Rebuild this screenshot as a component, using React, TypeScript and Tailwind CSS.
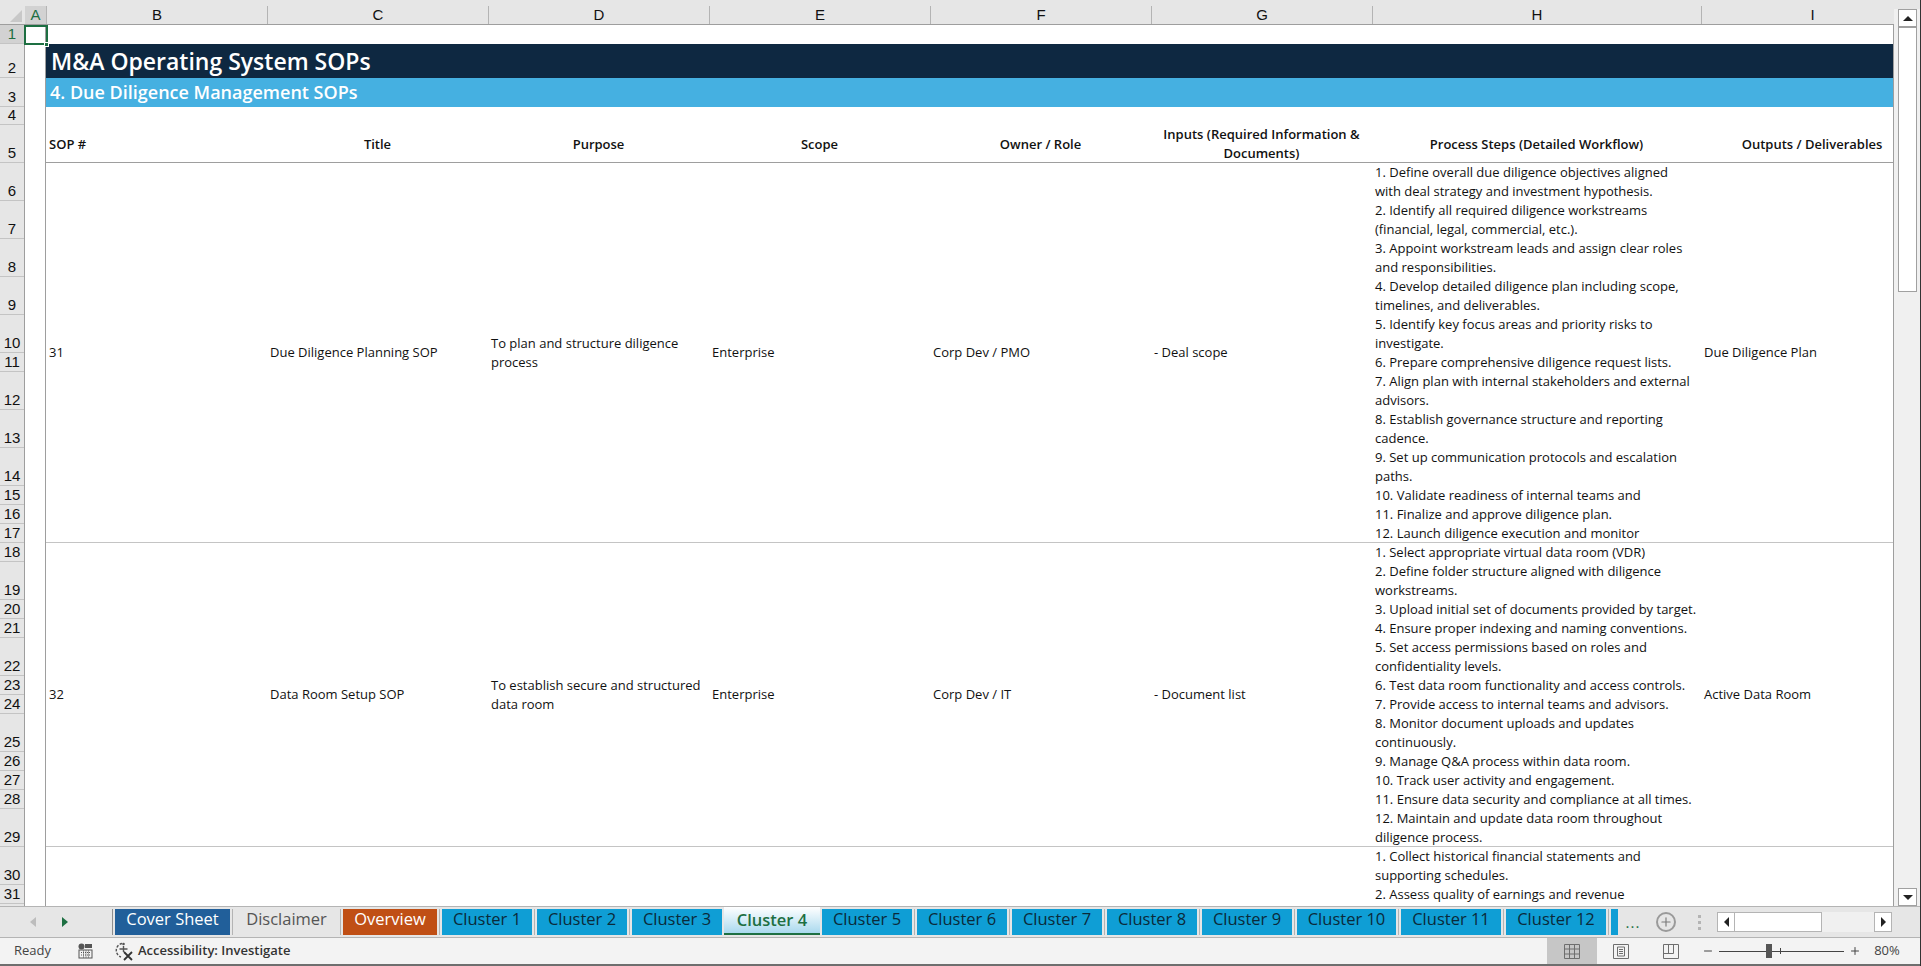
import React from "react";
import { Plus, Minus } from "lucide-react";

const sansStack = '"Open Sans", "Noto Sans", sans-serif';
const narrowStack = '"Liberation Sans Narrow", "Liberation Sans", sans-serif';

const colLetters = [
    { label: "A", w: "w-[22px]" },
    { label: "B", w: "w-[221px]" },
    { label: "C", w: "w-[221px]" },
    { label: "D", w: "w-[221px]" },
    { label: "E", w: "w-[221px]" },
    { label: "F", w: "w-[221px]" },
    { label: "G", w: "w-[221px]" },
    { label: "H", w: "w-[329px]" },
    { label: "I", w: "w-[222px]" },
];

const rowHeights: [number, string][] = [
    [1, "h-[19px]"], [2, "h-[34px]"], [3, "h-[29px]"], [4, "h-[18px]"], [5, "h-[38px]"],
    [6, "h-[38px]"], [7, "h-[38px]"], [8, "h-[38px]"], [9, "h-[38px]"], [10, "h-[38px]"],
    [11, "h-[19px]"], [12, "h-[38px]"], [13, "h-[38px]"], [14, "h-[38px]"], [15, "h-[19px]"],
    [16, "h-[19px]"], [17, "h-[19px]"], [18, "h-[19px]"], [19, "h-[38px]"], [20, "h-[19px]"],
    [21, "h-[19px]"], [22, "h-[38px]"], [23, "h-[19px]"], [24, "h-[19px]"], [25, "h-[38px]"],
    [26, "h-[19px]"], [27, "h-[19px]"], [28, "h-[19px]"], [29, "h-[38px]"], [30, "h-[38px]"],
    [31, "h-[19px]"],
];

const sops = [
    {
        id: "31",
        title: "Due Diligence Planning SOP",
        purpose: "To plan and structure diligence process",
        scope: "Enterprise",
        owner: "Corp Dev / PMO",
        inputs: "- Deal scope",
        outputs: "Due Diligence Plan",
        height: "h-[380px]",
        steps: [
            "1. Define overall due diligence objectives aligned\nwith deal strategy and investment hypothesis.",
            "2. Identify all required diligence workstreams\n(financial, legal, commercial, etc.).",
            "3. Appoint workstream leads and assign clear roles\nand responsibilities.",
            "4. Develop detailed diligence plan including scope,\ntimelines, and deliverables.",
            "5. Identify key focus areas and priority risks to\ninvestigate.",
            "6. Prepare comprehensive diligence request lists.",
            "7. Align plan with internal stakeholders and external\nadvisors.",
            "8. Establish governance structure and reporting\ncadence.",
            "9. Set up communication protocols and escalation\npaths.",
            "10. Validate readiness of internal teams and",
            "11. Finalize and approve diligence plan.",
            "12. Launch diligence execution and monitor",
        ],
    },
    {
        id: "32",
        title: "Data Room Setup SOP",
        purpose: "To establish secure and structured data room",
        scope: "Enterprise",
        owner: "Corp Dev / IT",
        inputs: "- Document list",
        outputs: "Active Data Room",
        height: "h-[304px]",
        steps: [
            "1. Select appropriate virtual data room (VDR)",
            "2. Define folder structure aligned with diligence\nworkstreams.",
            "3. Upload initial set of documents provided by target.",
            "4. Ensure proper indexing and naming conventions.",
            "5. Set access permissions based on roles and\nconfidentiality levels.",
            "6. Test data room functionality and access controls.",
            "7. Provide access to internal teams and advisors.",
            "8. Monitor document uploads and updates\ncontinuously.",
            "9. Manage Q&A process within data room.",
            "10. Track user activity and engagement.",
            "11. Ensure data security and compliance at all times.",
            "12. Maintain and update data room throughout\ndiligence process.",
        ],
    },
];

const tabs = [
    { name: "Cover Sheet", w: "w-[115px]", cls: "bg-[#215f9a] text-white" },
    { name: "Disclaimer", w: "w-[103px]", cls: "text-[#555555]" },
    { name: "Overview", w: "w-[94px]", cls: "bg-[#c04f15] text-white" },
    { name: "Cluster 1", w: "w-[90px]", cls: "bg-[#0f9ed5] text-[#0b2a3a]" },
    { name: "Cluster 2", w: "w-[90px]", cls: "bg-[#0f9ed5] text-[#0b2a3a]" },
    { name: "Cluster 3", w: "w-[90px]", cls: "bg-[#0f9ed5] text-[#0b2a3a]" },
];

const tabsAfter = [
    { name: "Cluster 5", w: "w-[90px]" },
    { name: "Cluster 6", w: "w-[90px]" },
    { name: "Cluster 7", w: "w-[90px]" },
    { name: "Cluster 8", w: "w-[90px]" },
    { name: "Cluster 9", w: "w-[90px]" },
    { name: "Cluster 10", w: "w-[99px]" },
    { name: "Cluster 11", w: "w-[100px]" },
    { name: "Cluster 12", w: "w-[100px]" },
];

const Cell = ({ w, children, cls = "" }: { w: string; children?: React.ReactNode; cls?: string }) => (
    <div className={`${w} shrink-0 px-[3px] flex items-center leading-[19px] ${cls}`}>
        <div className="w-full">{children}</div>
    </div>
);

const SopRow = ({ sop }: { sop: (typeof sops)[number] }) => (
    <div className={`flex shrink-0 ${sop.height} border-b border-[#c4c4c4] text-[13px] text-[#111111]`}>
        <Cell w="w-[221px]">{sop.id}</Cell>
        <Cell w="w-[221px]">{sop.title}</Cell>
        <Cell w="w-[221px]">{sop.purpose}</Cell>
        <Cell w="w-[221px]">{sop.scope}</Cell>
        <Cell w="w-[221px]">{sop.owner}</Cell>
        <Cell w="w-[221px]">{sop.inputs}</Cell>
        <Cell w="w-[329px]" cls="items-start whitespace-pre-line">
            {sop.steps.map((s) => (
                <div key={s}>{s}</div>
            ))}
        </Cell>
        <Cell w="w-[222px]">{sop.outputs}</Cell>
    </div>
);

const SheetTab = ({ name, w, cls }: { name: string; w: string; cls: string }) => (
    <>
        <div className={`${w} shrink-0 h-[26px] flex items-center justify-center pb-[5px] text-[16.5px] ${cls}`}>{name}</div>
        <div className="w-[5px] shrink-0 flex justify-center">
            <div className="w-px h-[26px] bg-[#b4b4b4]" />
        </div>
    </>
);

export default function App() {
    return (
        <div
            className="w-[1921px] h-[966px] overflow-hidden flex flex-col bg-white border-r border-[#333333]"
            style={{ fontFamily: sansStack }}
        >
            <div className="flex h-[906px] shrink-0">
                <div className="w-[1894px] shrink-0 flex flex-col overflow-hidden">
                    {/* column letters */}
                    <div
                        className="flex h-[25px] shrink-0 pt-[6px] bg-[#e6e6e6] border-b border-[#9e9e9e] overflow-hidden"
                        style={{ fontFamily: narrowStack }}
                    >
                        <div className="w-[25px] shrink-0 flex justify-end items-end pr-[3px] pb-[2px]">
                            <div className="w-0 h-0 border-l-[12px] border-b-[12px] border-l-transparent border-b-[#c8c8c8]" />
                        </div>
                        {colLetters.map((c) => (
                            <div
                                key={c.label}
                                className={`${c.w} shrink-0 flex items-center justify-center text-[15px] border-r border-[#b4b4b4] ${c.label === "A" ? "bg-[#d2d2d2] text-[#1d6f42]" : "text-[#111111]"}`}
                            >
                                {c.label}
                            </div>
                        ))}
                    </div>

                    <div className="flex h-[881px] shrink-0 overflow-hidden">
                        {/* row numbers */}
                        <div
                            className="w-[25px] shrink-0 bg-[#e6e6e6] border-r border-[#9e9e9e] flex flex-col"
                            style={{ fontFamily: narrowStack }}
                        >
                            {rowHeights.map(([n, h]) => (
                                <div
                                    key={n}
                                    className={`${h} shrink-0 flex items-end justify-center text-[15px] leading-[18px] border-b border-[#c4c4c4] ${n === 1 ? "bg-[#d2d2d2] text-[#1d6f42]" : "text-[#111111]"}`}
                                >
                                    {n}
                                </div>
                            ))}
                        </div>

                        {/* column A */}
                        <div className="w-[21px] shrink-0 border-r border-[#9e9e9e] relative">
                            <div className="absolute left-[-1px] top-0 w-[24px] h-[20px] border-2 border-[#1d6f42]" />
                            <div className="absolute left-[19px] top-[17px] w-[5px] h-[5px] bg-[#1d6f42] border border-white z-10" />
                        </div>

                        {/* sheet */}
                        <div className="flex-1 min-w-0 flex flex-col overflow-hidden border-r border-[#9e9e9e]">
                            <div className="h-[19px] shrink-0" />
                            <div className="h-[34px] shrink-0 bg-[#0e2841] text-white flex items-center pl-[5px] text-[23px] font-semibold">
                                M&amp;A Operating System SOPs
                            </div>
                            <div className="h-[29px] shrink-0 bg-[#45b0e1] text-white flex items-center pl-[4px] text-[18px] font-semibold">
                                4. Due Diligence Management SOPs
                            </div>
                            <div className="h-[18px] shrink-0" />
                            <div className="flex h-[38px] shrink-0 pt-px border-b border-[#9e9e9e] text-[13px] font-semibold text-[#111111]">
                                <Cell w="w-[221px]">SOP #</Cell>
                                <Cell w="w-[221px]" cls="text-center">Title</Cell>
                                <Cell w="w-[221px]" cls="text-center">Purpose</Cell>
                                <Cell w="w-[221px]" cls="text-center">Scope</Cell>
                                <Cell w="w-[221px]" cls="text-center">Owner / Role</Cell>
                                <Cell w="w-[221px]" cls="text-center">Inputs (Required Information &amp; Documents)</Cell>
                                <Cell w="w-[329px]" cls="text-center">Process Steps (Detailed Workflow)</Cell>
                                <Cell w="w-[222px]" cls="text-center">Outputs / Deliverables</Cell>
                            </div>
                            {sops.map((s) => (
                                <SopRow key={s.id} sop={s} />
                            ))}
                            <div className="flex text-[13px] text-[#111111] leading-[19px]">
                                <div className="w-[1326px] shrink-0" />
                                <div className="w-[329px] shrink-0 px-[3px]">
                                    <div>1. Collect historical financial statements and</div>
                                    <div>supporting schedules.</div>
                                    <div>2. Assess quality of earnings and revenue</div>
                                </div>
                            </div>
                        </div>
                    </div>
                </div>

                {/* vertical scrollbar */}
                <div className="w-[27px] shrink-0 bg-[#f0f0f0] flex flex-col items-center">
                    <div className="w-full h-[9px] shrink-0 bg-[#e6e6e6]" />
                    <div className="w-[19px] h-[18px] shrink-0 bg-white border border-[#a0a0a0] flex items-center justify-center">
                        <div className="w-0 h-0 border-x-[5px] border-b-[5px] border-x-transparent border-b-[#222222]" />
                    </div>
                    <div className="w-[19px] h-[265px] shrink-0 bg-white border border-[#a0a0a0]" />
                    <div className="flex-1" />
                    <div className="w-[19px] h-[18px] shrink-0 bg-white border border-[#a0a0a0] flex items-center justify-center">
                        <div className="w-0 h-0 border-x-[5px] border-t-[5px] border-x-transparent border-t-[#222222]" />
                    </div>
                </div>
            </div>

            {/* sheet tabs */}
            <div className="flex items-center h-[32px] shrink-0 bg-[#e6e6e6] border-t border-b border-[#b4b4b4]">
                <div className="w-[112px] shrink-0 flex items-center gap-[26px] pl-[30px]">
                    <div className="w-0 h-0 border-y-[5px] border-r-[6px] border-y-transparent border-r-[#bdbdbd]" />
                    <div className="w-0 h-0 border-y-[5px] border-l-[6px] border-y-transparent border-l-[#1d6f42]" />
                </div>
                <div className="w-px h-[26px] bg-[#8e8e8e] mr-[2px]" />
                {tabs.map((t) => (
                    <SheetTab key={t.name} {...t} />
                ))}
                <div className="w-[96px] -ml-[3px] shrink-0 h-[28px] self-start bg-gradient-to-b from-white to-[#a9d9ee] border-b-2 border-[#1d6f42] flex items-center justify-center text-[16.5px] font-semibold text-[#1d6f42]">
                    Cluster 4
                </div>
                <div className="w-[2px] shrink-0" />
                {tabsAfter.map((t) => (
                    <SheetTab key={t.name} name={t.name} w={t.w} cls="bg-[#0f9ed5] text-[#0b2a3a]" />
                ))}
                <div className="w-[7px] shrink-0 h-[26px] bg-[#0f9ed5]" />
                <div className="w-[30px] shrink-0 text-center text-[15px] tracking-[1px] text-[#1d6f42] leading-none">...</div>
                <div className="ml-[8px] w-[20px] h-[20px] shrink-0 rounded-full border-2 border-[#9a9a9a] flex items-center justify-center">
                    <Plus size={14} strokeWidth={2} className="text-[#7a7a7a]" />
                </div>
                <div className="ml-[22px] flex flex-col gap-[3px] shrink-0">
                    <div className="w-[3px] h-[3px] bg-[#b4b4b4]" />
                    <div className="w-[3px] h-[3px] bg-[#b4b4b4]" />
                    <div className="w-[3px] h-[3px] bg-[#b4b4b4]" />
                </div>
                <div className="ml-[16px] w-[175px] h-[20px] shrink-0 flex bg-[#f0f0f0]">
                    <div className="w-[18px] bg-white border border-[#b4b4b4] flex items-center justify-center">
                        <div className="w-0 h-0 border-y-[5px] border-r-[5px] border-y-transparent border-r-[#222222]" />
                    </div>
                    <div className="w-[87px] bg-white border-y border-r border-[#b4b4b4]" />
                    <div className="flex-1" />
                    <div className="w-[18px] bg-white border border-[#b4b4b4] flex items-center justify-center">
                        <div className="w-0 h-0 border-y-[5px] border-l-[5px] border-y-transparent border-l-[#222222]" />
                    </div>
                </div>
            </div>

            {/* status bar */}
            <div className="flex items-center flex-1 bg-[#f3f3f3] border-b-2 border-[#6e6e6e] text-[13px] text-[#444444]">
                <span className="ml-[14px] w-[64px]">Ready</span>
                <svg width="15" height="16" viewBox="0 0 15 16" className="shrink-0">
                    <circle cx="3.5" cy="3.5" r="3" fill="#555555" />
                    <rect x="7" y="1" width="7" height="4" fill="#555555" />
                    <rect x="1" y="7" width="13" height="8" fill="none" stroke="#555555" />
                    <path d="M3 9.5h9M3 12h9M5.5 7.5v7M8 7.5v7M10.5 7.5v7" stroke="#555555" strokeDasharray="1 1" />
                </svg>
                <svg width="20" height="20" viewBox="0 0 20 20" className="ml-[21px] shrink-0">
                    <path d="M8 2.5a7 7 0 0 0-1 13.5" fill="none" stroke="#555555" strokeWidth="1.4" strokeDasharray="2.5 1.5" />
                    <circle cx="9.5" cy="3" r="1.3" fill="#555555" />
                    <path d="M9.5 5v6M5.5 8h8" stroke="#555555" strokeWidth="1.4" />
                    <path d="M10 11l8 8M18 11l-8 8" stroke="#333333" strokeWidth="1.8" />
                </svg>
                <span className="ml-[4px] font-semibold text-[#333333]">Accessibility: Investigate</span>
                <div className="flex-1" />
                <div className="w-[50px] h-full bg-[#c6c6c6] flex items-center justify-center">
                    <svg width="16" height="15" viewBox="0 0 16 15">
                        <path d="M.5.5h15v14H.5zM5.5.5v14M10.5.5v14M.5 5h15M.5 10h15" fill="none" stroke="#6e6e6e" />
                    </svg>
                </div>
                <svg width="16" height="15" viewBox="0 0 16 15" className="ml-[16px] shrink-0">
                    <path d="M.5.5h15v14H.5z" fill="none" stroke="#6e6e6e" />
                    <path d="M4.5 3h7v9h-7zM6 5.5h4M6 7.5h4M6 9.5h4" fill="none" stroke="#6e6e6e" />
                </svg>
                <svg width="16" height="15" viewBox="0 0 16 15" className="ml-[34px] shrink-0">
                    <path d="M.5.5h15v14H.5zM.5 9.5h10V.5M5.5.5v9" fill="none" stroke="#6e6e6e" />
                </svg>
                <Minus size={12} className="ml-[23px] shrink-0 text-[#444444]" />
                <div className="ml-[5px] w-[125px] h-[14px] relative flex items-center shrink-0">
                    <div className="w-full h-px bg-[#444444]" />
                    <div className="absolute left-[47px] top-0 w-[6px] h-[14px] bg-[#555555]" />
                    <div className="absolute left-[61px] top-[4px] w-px h-[6px] bg-[#444444]" />
                </div>
                <Plus size={12} className="ml-[5px] shrink-0 text-[#444444]" />
                <span className="ml-[12px] mr-[19px] w-[28px] text-center">80%</span>
            </div>
        </div>
    );
}
